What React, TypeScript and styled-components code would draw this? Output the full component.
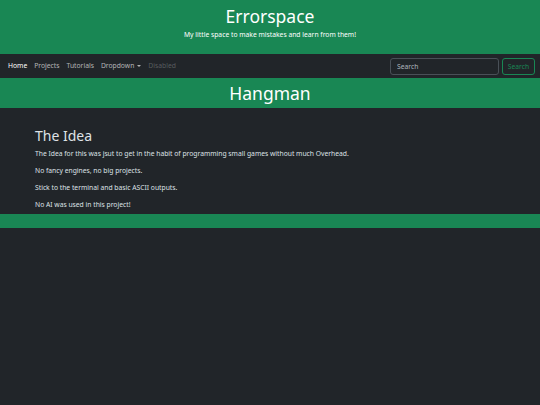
import styled, { createGlobalStyle } from 'styled-components'

const GlobalStyle = createGlobalStyle`
  html, body {
    margin: 0;
    padding: 0;
    background: #212529;
    font-family: 'Noto Sans', 'Open Sans', sans-serif;
    color: #dee2e6;
  }
  * {
    box-sizing: border-box;
  }
`

const navLinks = [
  { label: 'Home', active: true },
  { label: 'Projects' },
  { label: 'Tutorials' },
  { label: 'Dropdown', dropdown: true },
  { label: 'Disabled', disabled: true },
]

const paragraphs = [
  'The Idea for this was jsut to get in the habit of programming small games without much Overhead.',
  'No fancy engines, no big projects.',
  'Stick to the terminal and basic ASCII outputs.',
  'No AI was used in this project!',
]

const App = () => {
  return (
    <Page>
      <GlobalStyle />
      <Header>
        <SiteTitle>Errorspace</SiteTitle>
        <Tagline>My little space to make mistakes and learn from them!</Tagline>
      </Header>
      <Navbar>
        <NavList>
          {navLinks.map((link) => (
            <NavLink key={link.label} $active={link.active} $disabled={link.disabled}>
              {link.label}
              {link.dropdown && <Caret />}
            </NavLink>
          ))}
        </NavList>
        <SearchForm onSubmit={(e) => e.preventDefault()}>
          <SearchInput type="search" placeholder="Search" aria-label="Search" />
          <SearchButton type="submit">Search</SearchButton>
        </SearchForm>
      </Navbar>
      <Banner>Hangman</Banner>
      <Content>
        <Heading>The Idea</Heading>
        {paragraphs.map((text) => (
          <Paragraph key={text}>{text}</Paragraph>
        ))}
      </Content>
      <Footer />
    </Page>
  )
}

const Page = styled.div`
  min-height: 405px;
  background: #212529;
`
const Header = styled.header`
  height: 54px;
  background: #198754;
  color: #fff;
  display: flex;
  flex-direction: column;
  align-items: center;
  padding-top: 6px;
`
const SiteTitle = styled.h1`
  margin: 0;
  font-size: 17.5px;
  font-weight: 400;
  line-height: 1.2;
`
const Tagline = styled.p`
  margin: 3px 0 0;
  font-size: 6.75px;
  line-height: 1.5;
`
const Navbar = styled.nav`
  height: 24px;
  background: #212529;
  display: flex;
  align-items: center;
  justify-content: space-between;
  padding: 0 5px 0 4.5px;
`
const NavList = styled.ul`
  display: flex;
  margin: 0;
  padding: 0;
  list-style: none;
`
const NavLink = styled.li<{ $active?: boolean; $disabled?: boolean }>`
  padding: 0 3.5px;
  font-size: 6.75px;
  line-height: 10.5px;
  display: flex;
  align-items: center;
  color: ${(p) =>
    p.$active ? '#fff' : p.$disabled ? 'rgba(255, 255, 255, 0.25)' : 'rgba(255, 255, 255, 0.65)'};
`
const Caret = styled.span`
  margin-left: 3px;
  width: 0;
  height: 0;
  border-top: 2.5px solid currentColor;
  border-left: 2.5px solid transparent;
  border-right: 2.5px solid transparent;
`
const SearchForm = styled.form`
  display: flex;
  gap: 3px;
`
const SearchInput = styled.input`
  width: 109px;
  height: 17px;
  padding: 0 6px;
  font-family: inherit;
  font-size: 6.75px;
  color: #dee2e6;
  background: #212529;
  border: 1px solid #495057;
  border-radius: 3px;
  outline: none;

  &::placeholder {
    color: #adb5bd;
  }
`
const SearchButton = styled.button`
  width: 33px;
  height: 17px;
  padding: 0;
  font-family: inherit;
  font-size: 6.75px;
  color: #198754;
  background: transparent;
  border: 1px solid #198754;
  border-radius: 3px;
`
const Banner = styled.h2`
  margin: 0;
  height: 30px;
  background: #198754;
  color: #fff;
  font-size: 17.5px;
  font-weight: 400;
  line-height: 30px;
  text-align: center;
`
const Content = styled.section`
  padding: 20px 35px 4px;
`
const Heading = styled.h2`
  margin: 0 0 4px;
  font-size: 14px;
  font-weight: 400;
  line-height: 1.2;
  color: #dee2e6;
`
const Paragraph = styled.p`
  margin: 0 0 7px;
  font-size: 6.75px;
  line-height: 10px;

  &:last-child {
    margin-bottom: 0;
  }
`
const Footer = styled.footer`
  height: 14px;
  background: #198754;
`

export default App
